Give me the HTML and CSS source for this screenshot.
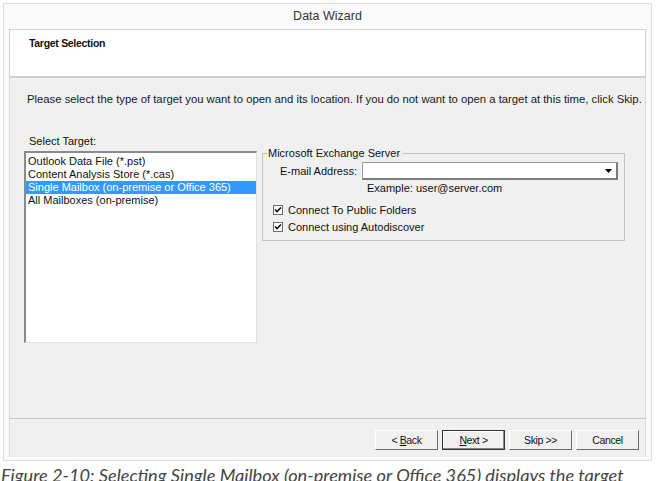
FILE: index.html
```html
<!DOCTYPE html>
<html lang="en">
<head>
    <meta charset="UTF-8">
    <title>Data Wizard</title>
    <link rel="stylesheet" href="styles.css">
</head>
<body>
    <div class="dialog">
        <div class="titlebar">Data Wizard</div>
        <div class="header">
            <h1>Target Selection</h1>
        </div>
        <div class="content">
            <p class="intro">Please select the type of target you want to open and its location. If you do not want to open a target at this time, click Skip.</p>
            <div class="main">
                <div class="targets">
                    <div class="label">Select Target:</div>
                    <ul class="listbox">
                        <li>Outlook Data File (*.pst)</li>
                        <li>Content Analysis Store (*.cas)</li>
                        <li class="selected">Single Mailbox (on-premise or Office 365)</li>
                        <li>All Mailboxes (on-premise)</li>
                    </ul>
                </div>
                <fieldset class="group">
                    <legend>Microsoft Exchange Server</legend>
                    <div class="email-row">
                        <span class="email-label">E-mail Address:</span>
                        <div class="combo">
                            <svg class="arrow" width="7" height="4" viewBox="0 0 7 4"><path d="M0 0h7L3.5 4z" fill="#000"/></svg>
                        </div>
                    </div>
                    <div class="hint">Example: user@server.com</div>
                    <div class="check">
                        <svg class="box" width="10" height="10" viewBox="0 0 10 10"><rect x="0.5" y="0.5" width="9" height="9" fill="#fff" stroke="#6d6d6d"/><path d="M2 4.5l2 2 4-4" fill="none" stroke="#111" stroke-width="1.6"/></svg>
                        <span>Connect To Public Folders</span>
                    </div>
                    <div class="check">
                        <svg class="box" width="10" height="10" viewBox="0 0 10 10"><rect x="0.5" y="0.5" width="9" height="9" fill="#fff" stroke="#6d6d6d"/><path d="M2 4.5l2 2 4-4" fill="none" stroke="#111" stroke-width="1.6"/></svg>
                        <span>Connect using Autodiscover</span>
                    </div>
                </fieldset>
            </div>
        </div>
        <div class="footer">
            <button class="btn">&lt; <u>B</u>ack</button>
            <button class="btn default"><u>N</u>ext &gt;</button>
            <button class="btn">Skip &gt;&gt;</button>
            <button class="btn">Cancel</button>
        </div>
    </div>
    <p class="caption">Figure 2-10: Selecting Single Mailbox (on-premise or Office 365) displays the target</p>
</body>
</html>
```

FILE: styles.css
```css
*{
    margin:0;
    padding:0;
    box-sizing:border-box;
}

body{
    background:#fff;
    font-family:"Liberation Sans", Arial, sans-serif;
    font-size:11px;
    color:#111;
    overflow:hidden;
}

.dialog{
    width:649px;
    margin:3px 0 0 3px;
    border:1px solid #dedede;
    background:#fafafa;
    padding:0 5px 3px 5px;
}

.titlebar{
    height:25px;
    line-height:25px;
    text-align:center;
    font-size:12.5px;
    color:#333;
}

.header{
    height:49px;
    background:#fff;
    border:1px solid #d4d4d4;
    border-bottom:2px solid #cfcfcf;
    padding:7px 0 0 19px;
}
.header h1{
    font-size:10.5px;
    font-weight:bold;
    line-height:13px;
    color:#111;
    letter-spacing:-0.3px;
}

.content{
    height:341px;
    background:#f0f0f0;
    border-left:1px solid #dcdcdc;
    border-right:1px solid #dcdcdc;
    border-bottom:1px solid #c8c8c8;
    padding:15px 0 0 14px;
}
.intro{
    font-size:11.3px;
    line-height:13px;
    padding-left:3px;
    color:#1a1a1a;
    white-space:nowrap;
}

.main{
    display:flex;
    align-items:flex-start;
    margin-top:29px;
}
.targets{
    width:233px;
}
.label{
    line-height:13px;
    padding-left:5px;
    margin-bottom:3px;
}
.listbox{
    list-style:none;
    height:192px;
    background:#fff;
    border-top:2px solid #8a8a8a;
    border-left:2px solid #8a8a8a;
    border-right:1px solid #e2e2e2;
    border-bottom:1px solid #e2e2e2;
    padding-top:2px;
}
.listbox li{
    height:13px;
    line-height:13px;
    padding-left:2px;
    white-space:nowrap;
}
.listbox li.selected{
    background:#3399ff;
    color:#fff;
}

.group{
    width:363px;
    margin:12px 0 0 5px;
    border:1px solid #c4c4c4;
    padding:0 5px 5px 0;
}
.group legend{
    margin-left:4px;
    padding:0 2px 0 1px;
    line-height:12px;
}
.email-row{
    display:flex;
    align-items:center;
    margin-top:3px;
}
.email-label{
    width:94px;
    text-align:right;
    margin-right:5px;
}
.combo{
    width:256px;
    height:18px;
    background:#fff;
    border-top:1px solid #9a9a9a;
    border-left:1px solid #9a9a9a;
    border-right:2px solid #7c7c7c;
    border-bottom:2px solid #7c7c7c;
    display:flex;
    justify-content:flex-end;
    align-items:center;
    padding-right:4px;
}
.hint{
    margin:2px 0 0 104px;
    line-height:13px;
}
.check{
    display:flex;
    align-items:center;
    height:17px;
    padding-left:10px;
}
.hint + .check{
    margin-top:6px;
}
.check .box{
    margin-right:5px;
}

.footer{
    height:38px;
    background:#f0f0f0;
    border-left:1px solid #dcdcdc;
    border-right:1px solid #dcdcdc;
    display:flex;
    justify-content:flex-end;
    gap:4px;
    padding:11px 6px 0 0;
}
.btn{
    width:63px;
    height:20px;
    background:#f0f0f0;
    font-family:"Liberation Sans", Arial, sans-serif;
    font-size:10.5px;
    letter-spacing:-0.4px;
    color:#111;
    border:1px solid;
    border-color:#fff #6a6a6a #6a6a6a #fff;
}
.btn.default{
    border:1px solid #333;
    box-shadow:inset -1px -1px 0 #8a8a8a, inset 1px 1px 0 #fff;
}

.caption{
    margin:3px 0 0 1px;
    font-family:"Lato", "Liberation Sans", sans-serif;
    font-style:italic;
    font-size:18.2px;
    line-height:22px;
    color:#444;
    white-space:nowrap;
}
```
